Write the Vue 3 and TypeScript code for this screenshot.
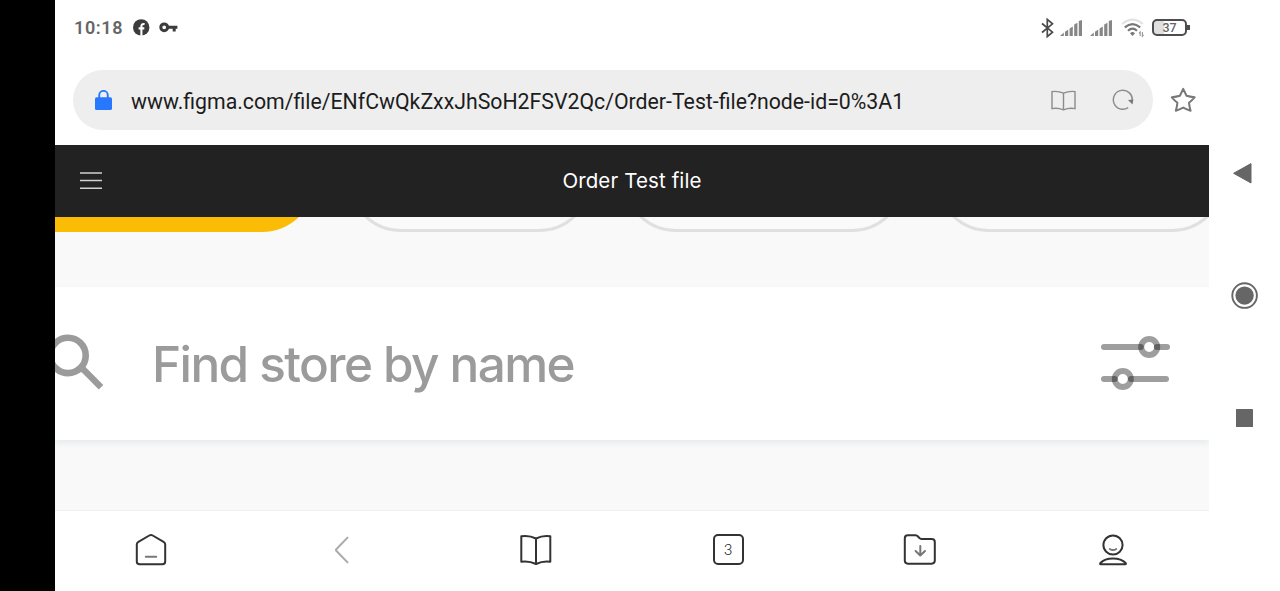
<template>
  <div class="device">
    <div class="notch"></div>

    <div class="screen">
      <!-- Status bar -->
      <header class="status-bar">
        <div class="status-left">
          <span class="clock">10:18</span>
          <svg class="icon-fb" width="17" height="17" viewBox="0 0 17 17">
            <circle cx="8.2" cy="8.4" r="8.2" fill="#3c3c3c" />
            <path d="M8.4 17V7.4Q8.4 4.6 11.6 5M5.6 9.4H11.3" fill="none" stroke="#fff" stroke-width="2.1" />
          </svg>
          <svg class="icon-key" width="19" height="11" viewBox="0 0 19 11">
            <circle cx="5.2" cy="5.3" r="3.4" fill="none" stroke="#3c3c3c" stroke-width="3" />
            <path d="M9 5.3H18.4M15.2 5V9.6" fill="none" stroke="#3c3c3c" stroke-width="3" />
          </svg>
        </div>
        <div class="status-right">
          <svg width="13" height="20" viewBox="0 0 13 20">
            <path d="M1 5.5L11.5 14.2L6.3 18.6V1.4L11.5 5.8L1 14.5" fill="none" stroke="#4a4a4a" stroke-width="1.7" />
          </svg>
          <svg v-for="n in 2" :key="n" class="signal" width="22" height="16" viewBox="0 0 22 16">
            <path d="M0 16L3.8 12.6V16ZM5 11.8L8.2 9.6V16H5ZM9.6 8.6L12.8 6.6V16H9.6ZM14.2 4.6L17.4 2.8V16H14.2ZM18.8 1L22 0V16H18.8Z" fill="#868686" />
          </svg>
          <svg class="wifi" width="24" height="20" viewBox="0 0 24 20">
            <path d="M1.2 6Q11.5-2.6 21.8 6" fill="none" stroke="#e2e2e2" stroke-width="2.2" />
            <path d="M3.8 9.3Q11.5 2.8 19.2 9.3M7 12.7Q11.5 8.6 16 12.7" fill="none" stroke="#777" stroke-width="2.2" />
            <path d="M9 15.2Q11.5 13 14 15.2L11.5 18Z" fill="#777" />
            <path d="M19.2 18.2V14L18 15.4M21.4 14V18.2L22.6 16.8" fill="none" stroke="#999" stroke-width="1.1" />
          </svg>
          <div class="battery"><span>37</span></div>
        </div>
      </header>

      <!-- Address bar -->
      <div class="address-row">
        <div class="address">
          <svg class="lock" width="17" height="21" viewBox="0 0 17 21">
            <path d="M4.2 9V5.2A4.3 4.3 0 0 1 12.8 5.2V9" fill="none" stroke="#2878ff" stroke-width="1.9" />
            <rect y="7.2" width="17" height="12.9" rx="1.6" fill="#2878ff" />
          </svg>
          <span class="url">{{ url }}</span>
          <svg class="reader" width="25" height="21" viewBox="0 0 25 21">
            <path d="M12.5 3.2Q7 .8 1 1.6V18.6Q7 17.6 12.5 19.8Q18 17.6 24 18.6V1.6Q18 .8 12.5 3.2ZM12.5 3.2V19.8" fill="none" stroke="#8c8c8c" stroke-width="1.4" />
          </svg>
          <svg class="reload" width="22" height="22" viewBox="0 0 22 22">
            <path d="M16.2 18.6A9.5 9.5 0 1 1 20.3 11.6" fill="none" stroke="#8c8c8c" stroke-width="1.4" />
            <path d="M16 11.1L21.4 10.6L20.5 15.6Z" fill="#777" />
          </svg>
        </div>
        <svg width="27" height="26" viewBox="0 0 27 26">
          <path d="M13.2 1.9L16.5 8.8Q20 9.8 24.6 10.3Q22 13.2 19 15.8Q19.4 19.5 20.6 23.8Q17 22.6 13.2 20.6Q9.4 22.6 5.8 23.8Q7 19.5 7.4 15.8Q4.4 13.2 1.8 10.3Q6.4 9.8 9.9 8.8Z" fill="none" stroke="#777" stroke-width="2" stroke-linejoin="round" />
        </svg>
      </div>

      <!-- Figma file header -->
      <div class="file-header">
        <svg class="burger" width="22" height="18" viewBox="0 0 22 18">
          <path d="M0 1H22M0 8.4H22M0 16.2H22" stroke="#d0d0d0" stroke-width="1.5" />
        </svg>
        <h1>Order Test file</h1>
      </div>

      <!-- Visible part of the prototype -->
      <main class="canvas">
        <div class="chips">
          <div v-for="chip in chips" :key="chip" class="chip" :class="chip"></div>
        </div>
        <div class="search">
          <svg class="glass" width="49" height="60" viewBox="0 0 49 60">
            <circle cx="13" cy="21.4" r="17.7" fill="none" stroke="#9b9b9b" stroke-width="6.6" />
            <path d="M25.5 34.6L28.5 35.6L46 53.2" fill="none" stroke="#9b9b9b" stroke-width="6.4" />
          </svg>
          <span class="placeholder">Find store by name</span>
          <svg class="filter" width="70" height="58" viewBox="0 0 70 58">
            <g fill="none" stroke="#000" stroke-width="6" stroke-linecap="round">
              <path v-for="line in filterLines" :key="line" :d="line" stroke-opacity=".38" />
              <circle cx="48.2" cy="12" r="8" stroke-opacity=".38" />
              <circle cx="21.8" cy="44" r="8" stroke-opacity=".38" />
            </g>
          </svg>
        </div>
      </main>

      <!-- Browser toolbar -->
      <nav class="toolbar">
        <div class="tool">
          <svg width="34" height="34" viewBox="0 0 34 34">
            <path d="M15.3 2.5Q17 1.5 18.7 2.5L29.6 8.8Q31.2 9.7 31.2 11.6V28.4Q31.2 31.2 28.4 31.2H5.6Q2.8 31.2 2.8 28.4V11.6Q2.8 9.7 4.4 8.8Z" />
            <path class="soft" d="M11.8 23.8H22.2" />
          </svg>
        </div>
        <div class="tool">
          <svg width="34" height="34" viewBox="0 0 34 34">
            <path class="faded" d="M21.5 4.6L10.3 16.2Q9.5 17 10.3 17.8L21.5 29.4" />
          </svg>
        </div>
        <div class="tool">
          <svg width="34" height="34" viewBox="0 0 34 34">
            <path d="M17 5.5Q10 2 2.3 3.3V28.7Q10 27.6 17 31Q24 27.6 31.3 28.7V3.3Q24 2 17 5.5ZM17 5.5V31" />
          </svg>
        </div>
        <div class="tool">
          <div class="tab-count">3</div>
        </div>
        <div class="tool">
          <svg width="34" height="34" viewBox="0 0 34 34">
            <path d="M4.8 2.3H12.5Q14 2.3 15 3.5L16.5 5.2Q17.2 6 18.5 6H28.7Q31.8 6 31.8 9V27.6Q31.8 30.7 28.7 30.7H4.8Q1.8 30.7 1.8 27.6V5.3Q1.8 2.3 4.8 2.3Z" />
            <path class="soft" d="M17.3 13V22.3M12.6 18L17.3 22.5L22 18" />
          </svg>
        </div>
        <div class="tool">
          <svg width="34" height="34" viewBox="0 0 34 34">
            <circle cx="17" cy="12" r="9.6" />
            <path class="soft" d="M13.8 16Q17 18.2 20.2 16" />
            <path d="M4.8 31.3Q3.6 31.3 4.4 30Q8.5 25.4 17 25.4T29.6 30Q30.4 31.3 29.2 31.3Z" />
          </svg>
        </div>
      </nav>
    </div>

    <!-- Android navigation keys -->
    <aside class="system-nav">
      <svg width="28" height="28" viewBox="0 0 28 28"><path d="M2.6 13.3L20 3.6V23Z" fill="#666" stroke="#666" stroke-linejoin="round" /></svg>
      <svg width="28" height="28" viewBox="0 0 28 28">
        <circle cx="13.6" cy="13.6" r="12.3" fill="none" stroke="#666" stroke-width="1.9" />
        <circle cx="13.6" cy="13.6" r="9.2" fill="#666" />
      </svg>
      <svg width="28" height="28" viewBox="0 0 28 28"><rect x="5" y="5" width="17" height="18" rx=".6" fill="#666" /></svg>
    </aside>
  </div>
</template>

<script setup lang="ts">
import { ref } from 'vue'

const url = ref<string>('www.figma.com/file/ENfCwQkZxxJhSoH2FSV2Qc/Order-Test-file?node-id=0%3A1')

const chips: string[] = ['active', 'small', 'medium', 'large']

const filterLines: string[] = [
  'M3 12H39.8',
  'M55.8 12H66',
  'M3 44H13.6',
  'M30 44H65'
]
</script>

<style>
body {
  margin: 0;
  background: #fff;
}
</style>

<style scoped>
* {
  box-sizing: border-box;
}

svg {
  display: block;
  flex: none;
}

.device {
  display: flex;
  width: 1280px;
  height: 591px;
  overflow: hidden;
  background: #fff;
  font-family: Roboto, sans-serif;
}

.notch {
  width: 55px;
  background: #000;
}

.screen {
  display: flex;
  flex-direction: column;
  width: 1154px;
}

/* Status bar */
.status-bar {
  display: flex;
  align-items: center;
  justify-content: space-between;
  height: 55px;
  padding: 0 19px;
}

.status-left,
.status-right {
  display: flex;
  align-items: center;
}

.clock {
  width: 59px;
  color: #666;
  font-size: 18px;
  font-weight: 600;
  letter-spacing: 0.6px;
}

.icon-key {
  margin-left: 9px;
}

.signal {
  margin-left: 8px;
}

.signal:nth-of-type(2) {
  margin-left: 6px;
}

.wifi {
  margin-left: 9px;
}

.battery {
  position: relative;
  display: flex;
  align-items: center;
  justify-content: center;
  width: 35px;
  height: 17px;
  margin: 0 3px 0 7px;
  border: 2px solid #4d4d4d;
  border-radius: 5px;
  background: linear-gradient(90deg, #e0e0e0 10px, #fff 10px);
  color: #666;
  font-size: 12.5px;
  font-weight: 500;
}

.battery::after {
  content: '';
  position: absolute;
  right: -5px;
  width: 3px;
  height: 5px;
  background: #4d4d4d;
}

/* Address bar */
.address-row {
  display: flex;
  align-items: center;
  height: 90px;
  padding: 0 12px 0 18px;
  justify-content: space-between;
}

.address {
  display: flex;
  align-items: center;
  width: 1080px;
  height: 60px;
  padding: 0 19px 0 22px;
  border-radius: 30px;
  background: #eee;
}

.url {
  flex: 1;
  margin-left: 19px;
  padding-top: 2px;
  color: #1c1c1c;
  font-size: 21.28px;
  white-space: nowrap;
}

.reload {
  margin-left: 36px;
}

/* File header */
.file-header {
  display: grid;
  grid-template-columns: 60px 1fr 60px;
  align-items: center;
  height: 72px;
  background: #222;
}

.burger {
  margin-left: 25px;
}

h1 {
  margin: 0;
  padding-bottom: 2px;
  color: #fff;
  font-family: Inter, sans-serif;
  font-size: 20.5px;
  font-weight: 400;
  letter-spacing: 0.12px;
  text-align: center;
}

/* Prototype */
.canvas {
  height: 293px;
  background: #f9f9f9;
  overflow: hidden;
}

.chips {
  display: flex;
  align-items: flex-end;
  gap: 31px;
  height: 15px;
  overflow: hidden;
}

.chip {
  flex: none;
  height: 106px;
  border: 3px solid #e0e0e0;
  border-radius: 53px;
  background: #fafafa;
}

.active {
  width: 260px;
  margin-right: 2px;
  border: none;
  border-radius: 0 53px 53px 0;
  background: #fbbc05;
}

.small {
  width: 244px;
}

.medium {
  width: 282px;
}

.large {
  width: 289px;
}

.search {
  display: flex;
  align-items: center;
  height: 153px;
  margin-top: 55px;
  padding-right: 38px;
  background: #fff;
  box-shadow: 0 3px 6px rgba(96, 140, 150, 0.13);
}

.placeholder {
  flex: 1;
  margin-left: 48px;
  padding-top: 1px;
  color: #9b9b9b;
  font-family: Inter, sans-serif;
  font-size: 49.5px;
  font-weight: 450;
  letter-spacing: -1.6px;
  white-space: nowrap;
}

/* Toolbar */
.toolbar {
  display: grid;
  grid-template-columns: repeat(6, 1fr);
  align-items: center;
  height: 81px;
  border-top: 1px solid #f0f0f0;
}

.tool {
  display: flex;
  justify-content: center;
  padding-bottom: 3px;
}

.tool svg {
  fill: none;
  stroke: #333;
  stroke-width: 2;
  stroke-linecap: round;
  stroke-linejoin: round;
}

.tool .soft {
  stroke: #777;
}

.tool .faded {
  stroke: #aaa;
}

.tab-count {
  width: 31px;
  height: 31px;
  border: 2px solid #333;
  border-radius: 5px;
  color: #222;
  font-size: 15px;
  font-weight: 300;
  line-height: 28px;
  text-align: center;
}

/* System keys */
.system-nav {
  display: flex;
  flex-direction: column;
  align-items: center;
  gap: 94px;
  width: 71px;
  padding-top: 160px;
}
</style>
